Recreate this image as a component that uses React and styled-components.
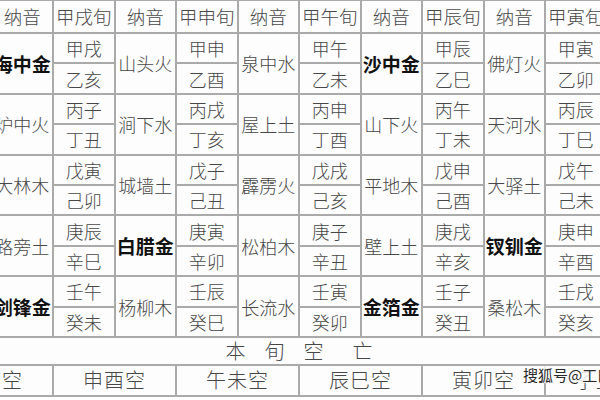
import React from "react";
import styled, { createGlobalStyle } from "styled-components";

const GlobalStyle = createGlobalStyle`
  html, body {
    margin: 0;
    padding: 0;
    background: #ffffff;
    overflow: hidden;
  }
  body {
    font-family: "Noto Sans CJK SC", "Noto Sans", sans-serif;
  }
`;

const Page = styled.div`
  position: relative;
  width: 600px;
  height: 400px;
  overflow: hidden;
  background: #ffffff;
`;

const Table = styled.div`
  display: grid;
  grid-template-columns: repeat(12, 59.5px);
  grid-template-rows: 31px repeat(10, 28.4px) 26px 29px;
  gap: 2px;
  padding: 2px;
  width: max-content;
  margin-left: -71px;
  margin-top: -1px;
  background: #aaaaaa;
`;

const Cell = styled.div`
  background: #fdfdfd;
  display: flex;
  align-items: center;
  justify-content: center;
  color: #474747;
  font-size: 18px;
  font-weight: 300;
  line-height: 1;
  white-space: nowrap;
`;

const HeadCell = styled(Cell)`
  font-size: 18.5px;
`;

const GanCell = styled(Cell)`
  font-size: 18px;
`;

const SoundCell = styled(Cell)`
  grid-row: span 2;
  font-size: ${(p) => (p.$bold ? "19px" : "18px")};
  font-weight: ${(p) => (p.$bold ? 700 : 300)};
  color: ${(p) => (p.$bold ? "#111111" : "#474747")};
`;

const TitleCell = styled(Cell)`
  grid-column: 1 / -1;
  font-size: 20px;
  gap: 19px;
`;

const TitleChar = styled.span`
  margin-left: ${(p) => p.$extra || 0}px;
`;

const KongCell = styled(Cell)`
  grid-column: span 2;
  font-size: 20px;
  letter-spacing: 1px;
`;

const Watermark = styled.div`
  position: absolute;
  left: 521px;
  top: 366px;
  padding: 1px 2px;
  font-size: 15px;
  line-height: 1;
  color: #2a2a2a;
  white-space: nowrap;
  background: rgba(253, 253, 253, 0.85);
  text-shadow: 0 0 2px #ffffff, 0 0 2px #ffffff;
`;

const xun = [
  {
    name: "甲子旬",
    rows: [
      ["甲子", "乙丑", "海中金", true],
      ["丙寅", "丁卯", "炉中火", false],
      ["戊辰", "己巳", "大林木", false],
      ["庚午", "辛未", "路旁土", false],
      ["壬申", "癸酉", "剑锋金", true],
    ],
    kong: "戌亥空",
  },
  {
    name: "甲戌旬",
    rows: [
      ["甲戌", "乙亥", "山头火", false],
      ["丙子", "丁丑", "涧下水", false],
      ["戊寅", "己卯", "城墙土", false],
      ["庚辰", "辛巳", "白腊金", true],
      ["壬午", "癸未", "杨柳木", false],
    ],
    kong: "申酉空",
  },
  {
    name: "甲申旬",
    rows: [
      ["甲申", "乙酉", "泉中水", false],
      ["丙戌", "丁亥", "屋上土", false],
      ["戊子", "己丑", "霹雳火", false],
      ["庚寅", "辛卯", "松柏木", false],
      ["壬辰", "癸巳", "长流水", false],
    ],
    kong: "午未空",
  },
  {
    name: "甲午旬",
    rows: [
      ["甲午", "乙未", "沙中金", true],
      ["丙申", "丁酉", "山下火", false],
      ["戊戌", "己亥", "平地木", false],
      ["庚子", "辛丑", "壁上土", false],
      ["壬寅", "癸卯", "金箔金", true],
    ],
    kong: "辰巳空",
  },
  {
    name: "甲辰旬",
    rows: [
      ["甲辰", "乙巳", "佛灯火", false],
      ["丙午", "丁未", "天河水", false],
      ["戊申", "己酉", "大驿土", false],
      ["庚戌", "辛亥", "钗钏金", true],
      ["壬子", "癸丑", "桑松木", false],
    ],
    kong: "寅卯空",
  },
  {
    name: "甲寅旬",
    rows: [
      ["甲寅", "乙卯", "大溪水", false],
      ["丙辰", "丁巳", "沙中土", false],
      ["戊午", "己未", "天上火", false],
      ["庚申", "辛酉", "石榴木", false],
      ["壬戌", "癸亥", "大海水", false],
    ],
    kong: "子丑空",
  },
];

export default function App() {
  const cells = [];
  xun.forEach((x) => {
    cells.push(<HeadCell key={`h-${x.name}`}>{x.name}</HeadCell>);
    cells.push(<HeadCell key={`hn-${x.name}`}>纳音</HeadCell>);
  });
  for (let r = 0; r < 5; r++) {
    xun.forEach((x) => {
      const [a, , sound, bold] = x.rows[r];
      cells.push(<GanCell key={`a-${x.name}-${r}`}>{a}</GanCell>);
      cells.push(
        <SoundCell key={`s-${x.name}-${r}`} $bold={bold}>
          {sound}
        </SoundCell>
      );
    });
    xun.forEach((x) => {
      const b = x.rows[r][1];
      cells.push(<GanCell key={`b-${x.name}-${r}`}>{b}</GanCell>);
    });
  }
  return (
    <Page>
      <GlobalStyle />
      <Table>
        {cells}
        <TitleCell>
          <TitleChar>本</TitleChar>
          <TitleChar>旬</TitleChar>
          <TitleChar>空</TitleChar>
          <TitleChar $extra={10}>亡</TitleChar>
        </TitleCell>
        {xun.map((x) => (
          <KongCell key={`k-${x.name}`}>{x.kong}</KongCell>
        ))}
      </Table>
      <Watermark>搜狐号@工口</Watermark>
    </Page>
  );
}
